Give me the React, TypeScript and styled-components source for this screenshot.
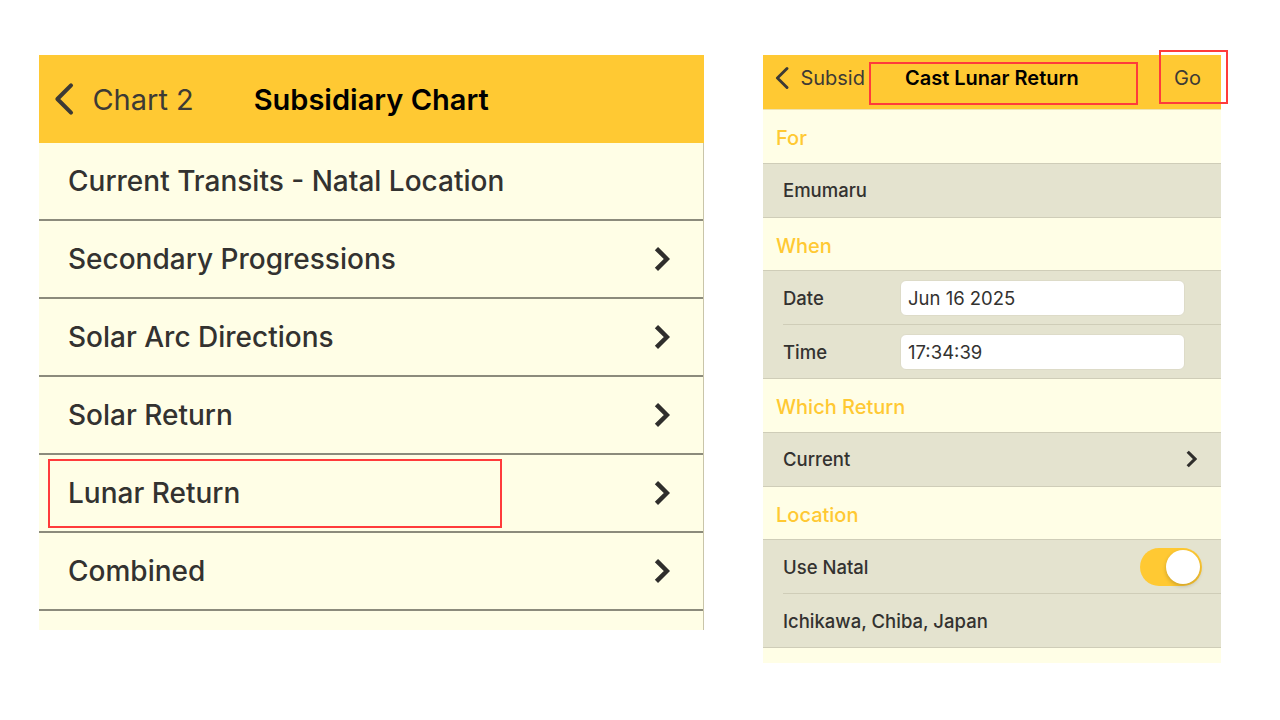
import React from 'react';
import styled, {createGlobalStyle} from 'styled-components';

const GlobalStyle = createGlobalStyle`
  body {
    margin: 0;
    background: #ffffff;
    font-family: Inter, "Noto Sans", sans-serif;
  }
`;

const YELLOW = '#ffc933';
const CREAM = '#fffee6';
const GREY_ROW = '#e4e3cf';

const Page = styled.div`
  display: flex;
  align-items: flex-start;
  gap: 59px;
  padding: 55px 0 0 39px;
  width: 1280px;
  height: 720px;
  box-sizing: border-box;
`;

const LeftPanel = styled.div`
  position: relative;
  width: 665px;
  background: ${CREAM};
`;

const LeftHeader = styled.div`
  height: 88px;
  background: ${YELLOW};
  display: flex;
  align-items: center;
  padding-left: 15px;
  box-sizing: border-box;
`;

const BackLink = styled.div<{ $size: number; $gap: number }>`
  display: flex;
  align-items: center;
  gap: ${p => p.$gap}px;
  color: #3d3a35;
  font-size: ${p => p.$size}px;
  font-weight: 400;
`;

const LeftTitle = styled.div`
  margin-left: 60px;
  font-size: 29px;
  font-weight: 600;
  color: #000;
`;

const LeftList = styled.div`
  border-right: 1px solid #c9c5a9;
  padding-bottom: 19px;
`;

const LeftRow = styled.div`
  height: 76px;
  border-bottom: 2px solid #8c8b7c;
  display: flex;
  align-items: center;
  justify-content: space-between;
  padding: 0 33px 0 29px;
  box-sizing: content-box;
  font-size: 28px;
  font-weight: 500;
  color: #333230;
`;

const Highlight = styled.div<{ $left: number; $top: number; $w: number; $h: number }>`
  position: absolute;
  left: ${p => p.$left}px;
  top: ${p => p.$top}px;
  width: ${p => p.$w}px;
  height: ${p => p.$h}px;
  border: 2px solid #ff3b3b;
  box-sizing: border-box;
  pointer-events: none;
`;

const RightPanel = styled.div`
  position: relative;
  width: 458px;
  background: ${CREAM};
  padding-bottom: 15px;
`;

const RightHeader = styled.div`
  height: 55px;
  background: ${YELLOW};
  display: flex;
  align-items: center;
  padding: 0 11px 8px 12px;
  box-sizing: border-box;
  border-bottom: 1px solid #efe3b0;
`;

const RightTitle = styled.div`
  flex: 1;
  padding-left: 40px;
  font-size: 20px;
  font-weight: 600;
  color: #000;
`;

const GoButton = styled.div`
  font-size: 20px;
  color: #3d3a35;
  padding-right: 9px;
`;

const SectionLabel = styled.div`
  height: 48.5px;
  display: flex;
  align-items: center;
  padding: 4px 0 0 13px;
  font-size: 20px;
  font-weight: 500;
  color: ${YELLOW};
  border-bottom: 1px solid #cfcdb8;
`;

const Group = styled.div`
  background: ${GREY_ROW};
  border-bottom: 1px solid #cfcdb8;
`;

const FormRow = styled.div<{ $divider?: boolean }>`
  height: 53px;
  display: flex;
  align-items: center;
  margin-left: 20px;
  padding-right: 24px;
  font-size: 18.5px;
  font-weight: 500;
  color: #333230;
  border-bottom: ${p => (p.$divider ? '1px solid #cfcdb8' : 'none')};
`;

const FieldLabel = styled.div`
  width: 117px;
`;

const InputBox = styled.div`
  flex: 1;
  height: 36px;
  margin-right: 12px;
  background: #ffffff;
  border-radius: 6px;
  border: 1px solid #dddbc8;
  box-sizing: border-box;
  display: flex;
  align-items: center;
  padding-left: 7px;
  font-size: 18.5px;
  font-weight: 400;
  color: #333230;
`;

const Spacer = styled.div`
  flex: 1;
`;

const Toggle = styled.div<{ $on: boolean }>`
  width: 62px;
  height: 38px;
  border-radius: 19px;
  background: ${p => (p.$on ? YELLOW : '#ccc')};
  display: flex;
  align-items: center;
  justify-content: ${p => (p.$on ? 'flex-end' : 'flex-start')};
  padding: 2px;
  box-sizing: border-box;
  margin-right: -5px;
`;

const Knob = styled.div`
  width: 34px;
  height: 34px;
  border-radius: 50%;
  background: #fff;
  box-shadow: 0 2px 4px rgba(0, 0, 0, 0.2);
`;

const BackChevron = ({size}: { size: number }) => (
    <svg width={size * 0.6} height={size} viewBox="0 0 12 20" fill="none">
        <path d="M10 2 L2 10 L10 18" stroke="#3d3a35" strokeWidth="2.4" strokeLinecap="round" strokeLinejoin="round"/>
    </svg>
);

const Disclosure = ({size}: { size: number }) => (
    <svg width={size * 0.62} height={size} viewBox="0 0 10 16" fill="none">
        <path d="M2.5 2.5 L8 8 L2.5 13.5" stroke="#2f2e2c" strokeWidth="2.8" strokeLinecap="square" strokeLinejoin="miter"/>
    </svg>
);

const leftItems = [
    {label: 'Current Transits - Natal Location', chevron: false},
    {label: 'Secondary Progressions', chevron: true},
    {label: 'Solar Arc Directions', chevron: true},
    {label: 'Solar Return', chevron: true},
    {label: 'Lunar Return', chevron: true},
    {label: 'Combined', chevron: true},
];

export default function App() {
    return (
        <>
            <GlobalStyle/>
            <Page>
                <LeftPanel>
                    <LeftHeader>
                        <BackLink $size={29} $gap={18}>
                            <BackChevron size={34}/>
                            Chart 2
                        </BackLink>
                        <LeftTitle>Subsidiary Chart</LeftTitle>
                    </LeftHeader>
                    <LeftList>
                        {leftItems.map(item => (
                            <LeftRow key={item.label}>
                                {item.label}
                                {item.chevron && <Disclosure size={26}/>}
                            </LeftRow>
                        ))}
                    </LeftList>
                    <Highlight $left={9} $top={404} $w={454} $h={69}/>
                </LeftPanel>

                <RightPanel>
                    <RightHeader>
                        <BackLink $size={20} $gap={11}>
                            <BackChevron size={24}/>
                            Subsid
                        </BackLink>
                        <RightTitle>Cast Lunar Return</RightTitle>
                        <GoButton>Go</GoButton>
                    </RightHeader>

                    <SectionLabel>For</SectionLabel>
                    <Group>
                        <FormRow>Emumaru</FormRow>
                    </Group>

                    <SectionLabel>When</SectionLabel>
                    <Group>
                        <FormRow $divider>
                            <FieldLabel>Date</FieldLabel>
                            <InputBox>Jun 16 2025</InputBox>
                        </FormRow>
                        <FormRow>
                            <FieldLabel>Time</FieldLabel>
                            <InputBox>17:34:39</InputBox>
                        </FormRow>
                    </Group>

                    <SectionLabel>Which Return</SectionLabel>
                    <Group>
                        <FormRow>
                            Current
                            <Spacer/>
                            <Disclosure size={18}/>
                        </FormRow>
                    </Group>

                    <SectionLabel>Location</SectionLabel>
                    <Group>
                        <FormRow $divider>
                            Use Natal
                            <Spacer/>
                            <Toggle $on><Knob/></Toggle>
                        </FormRow>
                        <FormRow>Ichikawa, Chiba, Japan</FormRow>
                    </Group>

                    <Highlight $left={106} $top={7} $w={269} $h={43}/>
                    <Highlight $left={396} $top={-5} $w={69} $h={54}/>
                </RightPanel>
            </Page>
        </>
    );
}
